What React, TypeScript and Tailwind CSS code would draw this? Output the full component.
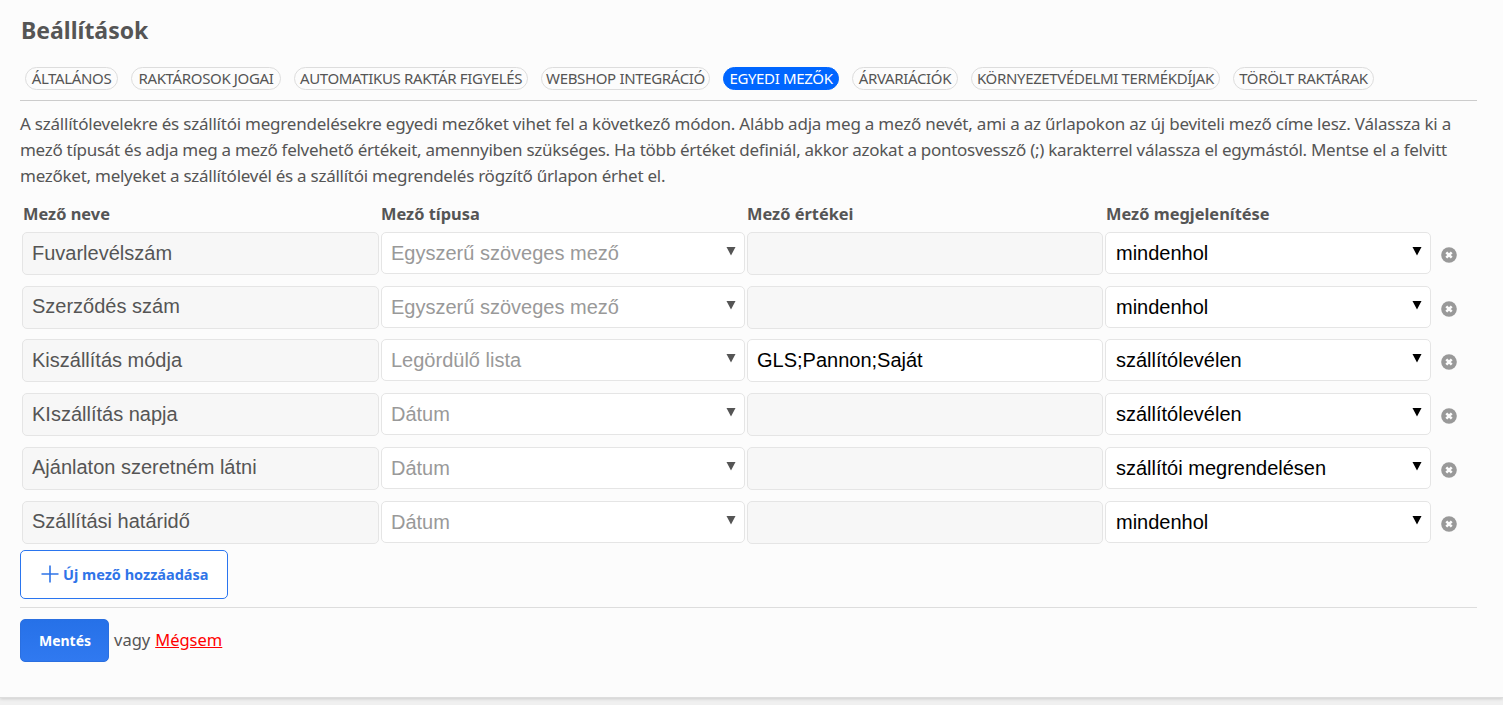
const tabs = [
  { t: "ÁLTALÁNOS", w: "w-[93px]" },
  { t: "RAKTÁROSOK JOGAI", w: "w-[150px]" },
  { t: "AUTOMATIKUS RAKTÁR FIGYELÉS", w: "w-[234px]" },
  { t: "WEBSHOP INTEGRÁCIÓ", w: "w-[169px]" },
  { t: "EGYEDI MEZŐK", w: "w-[116px]", active: true },
  { t: "ÁRVARIÁCIÓK", w: "w-[106px]" },
  { t: "KÖRNYEZETVÉDELMI TERMÉKDÍJAK", w: "w-[249px]" },
  { t: "TÖRÖLT RAKTÁRAK", w: "w-[141px]" },
];

const rows = [
  ["Fuvarlevélszám", "Egyszerű szöveges mező", "", "mindenhol"],
  ["Szerződés szám", "Egyszerű szöveges mező", "", "mindenhol"],
  ["Kiszállítás módja", "Legördülő lista", "GLS;Pannon;Saját", "szállítólevélen"],
  ["KIszállítás napja", "Dátum", "", "szállítólevélen"],
  ["Ajánlaton szeretném látni", "Dátum", "", "szállítói megrendelésen"],
  ["Szállítási határidő", "Dátum", "", "mindenhol"],
];

function Arrow({ dark }: { dark?: boolean }) {
  return (
    <svg
      className="absolute right-[8px] top-[13px]"
      width="10"
      height="10"
      viewBox="0 0 10 10"
    >
      <path d="M0.5 1H9.5L5 9.5Z" fill={dark ? "#000000" : "#555555"} />
    </svg>
  );
}

function Remove() {
  return (
    <svg width="16" height="16" viewBox="0 0 16 16" className="mt-[3px]">
      <circle cx="8" cy="8" r="7.8" fill="#999999" />
      <path d="M5.3 5.3L10.7 10.7M10.7 5.3L5.3 10.7" stroke="#fcfcfc" strokeWidth="2.6" />
    </svg>
  );
}

export default function App() {
  return (
    <div className="h-[705px] overflow-hidden bg-[#f0f0f0] font-['Noto_Sans',sans-serif] text-[#555555]">
      <div className="h-[698px] border-b border-[#dddddd] bg-[#fcfcfc] pl-5 pr-[26px] shadow-[0_1px_3px_rgba(0,0,0,0.15)]">
        <h1 className="pl-px pt-[14px] text-[23px] font-bold leading-[32px]">Beállítások</h1>

        <div className="mt-[21px] flex h-[34px] gap-[13px] border-b border-[#cccccc] pl-[5px]">
          {tabs.map((x) => (
            <div
              key={x.t}
              className={`flex h-[23px] items-center justify-center rounded-full border text-[15px] leading-none tracking-[-0.35px] whitespace-nowrap ${x.w} ${
                x.active ? "border-[#0066ff] bg-[#0066ff] text-white" : "border-[#dddddd] text-[#555555]"
              }`}
            >
              {x.t}
            </div>
          ))}
        </div>

        <p className="mt-[10px] text-[17px] leading-[26px] whitespace-nowrap">
          <span className="tracking-[-0.22px]">
            A szállítólevelekre és szállítói megrendelésekre egyedi mezőket vihet fel a következő módon. Alább adja meg a mező nevét, ami a az űrlapokon az új beviteli mező címe lesz. Válassza ki a
          </span>
          <br />
          <span className="tracking-[-0.28px]">
            mező típusát és adja meg a mező felvehető értékeit, amennyiben szükséges. Ha több értéket definiál, akkor azokat a pontosvessző (;) karakterrel válassza el egymástól. Mentse el a felvitt
          </span>
          <br />
          <span className="tracking-[-0.26px]">
            mezőket, melyeket a szállítólevél és a szállítói megrendelés rögzítő űrlapon érhet el.
          </span>
        </p>

        <div className="mt-[12px] flex h-[31px] items-start text-[16.4px] font-bold leading-[26px]">
          <div className="w-[361px] pl-[3px]">Mező neve</div>
          <div className="w-[366px]">Mező típusa</div>
          <div className="w-[359px]">Mező értékei</div>
          <div>Mező megjelenítése</div>
        </div>

        <div className="font-['Liberation_Sans',sans-serif] text-[20px]">
          {rows.map((r) => (
            <div key={r[0]} className="flex h-[53.74px] items-start gap-[2px] pl-[2px]">
              <div className="flex h-[43px] w-[357px] items-center rounded-[5px] border border-[#e5e5e5] bg-[#f7f7f7] pb-[2px] pl-[9px] text-[#555555]">
                {r[0]}
              </div>
              <div className="relative flex h-[42px] w-[364px] items-center rounded-[5px] border border-[#e5e5e5] bg-white pl-[9px] text-[#999999]">
                {r[1]}
                <Arrow />
              </div>
              <div
                className={`flex h-[43px] w-[356px] items-center rounded-[5px] border border-[#e5e5e5] pb-[2px] pl-[9px] text-black ${
                  r[2] ? "bg-white" : "bg-[#f7f7f7]"
                }`}
              >
                {r[2]}
              </div>
              <div className="relative flex h-[42px] w-[326px] items-center rounded-[5px] border border-[#e5e5e5] bg-white pl-[10px] text-black">
                {r[3]}
                <Arrow dark />
              </div>
              <div className="ml-[8px] flex h-[43px] items-center">
                <Remove />
              </div>
            </div>
          ))}
        </div>

        <div className="mt-[-4.44px] flex h-[49px] w-[208px] items-center rounded-[5px] border border-[#2a75ef] bg-white pl-[20px] text-[14.5px] font-bold text-[#2f74e8]">
          <svg width="18" height="18" viewBox="0 0 18 18" className="mr-[4px]">
            <path d="M9 0.5V17.5M0.5 9H17.5" stroke="#2f74e8" strokeWidth="1.6" />
          </svg>
          Új mező hozzáadása
        </div>

        <div className="mt-[8px] h-px bg-[#dddddd]" />

        <div className="mt-[11px] flex items-center">
          <div className="flex h-[43px] w-[89px] items-center justify-center rounded-[5px] border border-[#2a6fe0] bg-[linear-gradient(#2671e8,#3079f0)] pl-[1px] text-[14px] font-bold text-white">
            Mentés
          </div>
          <span className="ml-[5px] text-[16.5px]">vagy</span>
          <a className="ml-[5px] text-[16.5px] text-[#ff0000] underline">Mégsem</a>
        </div>
      </div>
    </div>
  );
}
